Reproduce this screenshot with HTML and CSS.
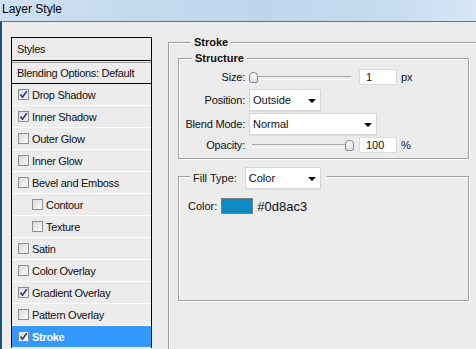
FILE: index.html
```html
<!DOCTYPE html>
<html lang="en">
<head>
  <meta charset="UTF-8" />
  <title>Layer Style</title>
  <link rel="stylesheet" href="styles.css">
</head>
<body>
  <div class="titlebar">Layer Style</div>

  <div class="dialog">
    <div class="styles-panel">
      <div class="panel-head">Styles</div>
      <div class="panel-blend">Blending Options: Default</div>
      <div class="item"><span class="cb"><svg viewBox="0 0 9 9"><path d="M1.5 4.5 L3.5 7.2 L7.8 1.2"/></svg></span>Drop Shadow</div>
      <div class="item"><span class="cb"><svg viewBox="0 0 9 9"><path d="M1.5 4.5 L3.5 7.2 L7.8 1.2"/></svg></span>Inner Shadow</div>
      <div class="item"><span class="cb"></span>Outer Glow</div>
      <div class="item"><span class="cb"></span>Inner Glow</div>
      <div class="item"><span class="cb"></span>Bevel and Emboss</div>
      <div class="item sub"><span class="cb"></span>Contour</div>
      <div class="item sub"><span class="cb"></span>Texture</div>
      <div class="item"><span class="cb"></span>Satin</div>
      <div class="item"><span class="cb"></span>Color Overlay</div>
      <div class="item"><span class="cb"><svg viewBox="0 0 9 9"><path d="M1.5 4.5 L3.5 7.2 L7.8 1.2"/></svg></span>Gradient Overlay</div>
      <div class="item"><span class="cb"></span>Pattern Overlay</div>
      <div class="item selected"><span class="cb"><svg viewBox="0 0 9 9"><path d="M1.5 4.5 L3.5 7.2 L7.8 1.2"/></svg></span>Stroke</div>
    </div>

    <div class="settings">
      <div class="group outer">
        <div class="group-title">Stroke</div>

        <div class="group structure">
          <div class="group-title">Structure</div>
          <div class="form">
            <label>Size:</label>
            <div class="ctrl">
              <div class="slider"><span class="thumb" style="left:0px"></span></div>
              <span class="num">1</span><span class="unit">px</span>
            </div>

            <label>Position:</label>
            <div class="ctrl">
              <div class="dropdown pos">Outside<span class="arrow"></span></div>
            </div>

            <label>Blend Mode:</label>
            <div class="ctrl">
              <div class="dropdown blend">Normal<span class="arrow"></span></div>
            </div>

            <label>Opacity:</label>
            <div class="ctrl">
              <div class="slider"><span class="thumb" style="left:96px"></span></div>
              <span class="num">100</span><span class="unit">%</span>
            </div>
          </div>
        </div>

        <div class="group fill">
          <div class="group-title fill-title">
            <span class="fill-label">Fill Type:</span>
            <div class="dropdown filltype">Color<span class="arrow"></span></div>
          </div>
          <div class="color-row">
            <span>Color:</span>
            <span class="swatch"></span>
            <span class="hex">#0d8ac3</span>
          </div>
        </div>
      </div>
    </div>
  </div>
</body>
</html>
```

FILE: styles.css
```css
* {
  box-sizing: border-box;
}

body {
  margin: 0;
  width: 476px;
  height: 349px;
  overflow: hidden;
  background: #ececec;
  font-family: "Liberation Sans", Arial, sans-serif;
  font-size: 11px;
  color: #111;
}

.titlebar {
  height: 21px;
  padding-left: 2px;
  font-size: 12px;
  line-height: 19px;
  color: #000;
  background: linear-gradient(90deg, #cfe0f2 0%, #c4d9ee 30%, #bed5ec 55%, #c6dbf0 80%, #d6e6f6 100%);
}

.dialog {
  display: flex;
  align-items: flex-start;
  height: 328px;
  overflow: hidden;
  border-top: 1px solid #5d7690;
  border-left: 2px solid #24506e;
  padding: 15px 0 0 9px;
}

/* left list */
.styles-panel {
  flex: none;
  width: 141px;
  border: 1px solid #000;
  border-bottom: none;
  letter-spacing: -0.3px;
}

.panel-head {
  height: 23px;
  line-height: 22px;
  padding-left: 5px;
  border-bottom: 1px solid #000;
}

.panel-blend {
  height: 22px;
  line-height: 20px;
  margin-top: 1px;
  padding-left: 5px;
  border-top: 1px solid #9a9a9a;
  border-bottom: 1px solid #000;
}

.item {
  display: flex;
  align-items: center;
  height: 22px;
  padding-left: 6px;
  border-bottom: 1px solid #fff;
}

.item.sub {
  padding-left: 20px;
}

.item.selected {
  background: #3399ff;
  color: #fff;
  font-weight: bold;
}

.cb {
  flex: none;
  display: flex;
  align-items: center;
  justify-content: center;
  width: 11px;
  height: 11px;
  margin-right: 3px;
  border: 1px solid #8e8f8f;
  background: linear-gradient(135deg, #d8d8d8, #fbfbfb);
}

.cb svg {
  width: 9px;
  height: 9px;
  fill: none;
  stroke: #2c3590;
  stroke-width: 1.6;
}

/* right side */
.settings {
  flex: none;
  width: 308px;
  margin: 5px 0 0 16px;
}

.group {
  border: 1px solid #a0a0a0;
  box-shadow: inset 1px 1px 0 #fff, 1px 1px 0 #fff;
}

.group-title {
  width: fit-content;
  margin: -7px 0 0 13px;
  padding: 0 3px;
  line-height: 13px;
  font-weight: bold;
  background: #ececec;
}

.outer {
  height: 310px;
  padding-left: 9px;
  border-width: 1px 0 0 1px;
  box-shadow: inset 1px 1px 0 #fff;
}

.structure {
  width: 291px;
  margin-top: 9px;
  padding-bottom: 5px;
}

.form {
  display: grid;
  grid-template-columns: 66px auto;
  grid-template-rows: 18px 22px 22px 16px;
  column-gap: 4px;
  row-gap: 2px;
  align-items: start;
  margin-top: 4px;
}

.form label {
  align-self: center;
  text-align: right;
  letter-spacing: -0.2px;
}

.form label:first-child {
  align-self: start;
  line-height: 16px;
}

.ctrl {
  display: flex;
  align-items: center;
}

.slider {
  position: relative;
  width: 105px;
  height: 16px;
}

.slider::before {
  content: "";
  position: absolute;
  left: 3px;
  right: 3px;
  top: 7px;
  height: 2px;
  border-top: 1px solid #a6a6a6;
  border-bottom: 1px solid #fff;
}

.thumb {
  position: absolute;
  top: 3px;
  width: 9px;
  height: 11px;
  border: 1px solid #8a8a8a;
  border-radius: 4px 4px 2px 2px;
  background: linear-gradient(#fdfdfd, #dedede);
}

.num {
  width: 38px;
  height: 16px;
  margin-left: 5px;
  padding-left: 6px;
  line-height: 14px;
  background: #fff;
  border: 1px solid #dcdcdc;
}

.unit {
  margin-left: 4px;
}

.dropdown {
  position: relative;
  height: 22px;
  line-height: 20px;
  padding-left: 3px;
  background: #fff;
  border: 1px solid #d6d6d6;
  box-shadow: 0 1px 1px rgba(0, 0, 0, 0.06);
  font-weight: normal;
}

.dropdown.pos {
  width: 72px;
}

.dropdown.blend {
  width: 128px;
}

.dropdown.filltype {
  width: 76px;
}

.arrow {
  position: absolute;
  right: 4px;
  top: 9px;
  border-left: 4px solid transparent;
  border-right: 4px solid transparent;
  border-top: 4px solid #000;
}

.fill {
  width: 291px;
  height: 125px;
  margin-top: 17px;
  padding-left: 9px;
}

.fill-title {
  display: flex;
  align-items: center;
  margin: -10px 0 0 2px;
  padding: 0 6px 0 3px;
  font-weight: normal;
  line-height: 22px;
}

.fill-label {
  margin-right: 8px;
}

.color-row {
  display: flex;
  align-items: center;
  height: 16px;
  margin-top: 9px;
}

.swatch {
  width: 32px;
  height: 16px;
  margin-left: 4px;
  background: #0d8ac3;
  border: 1px solid #7d7d7d;
}

.hex {
  margin-left: 4px;
  font-size: 13px;
}
```
